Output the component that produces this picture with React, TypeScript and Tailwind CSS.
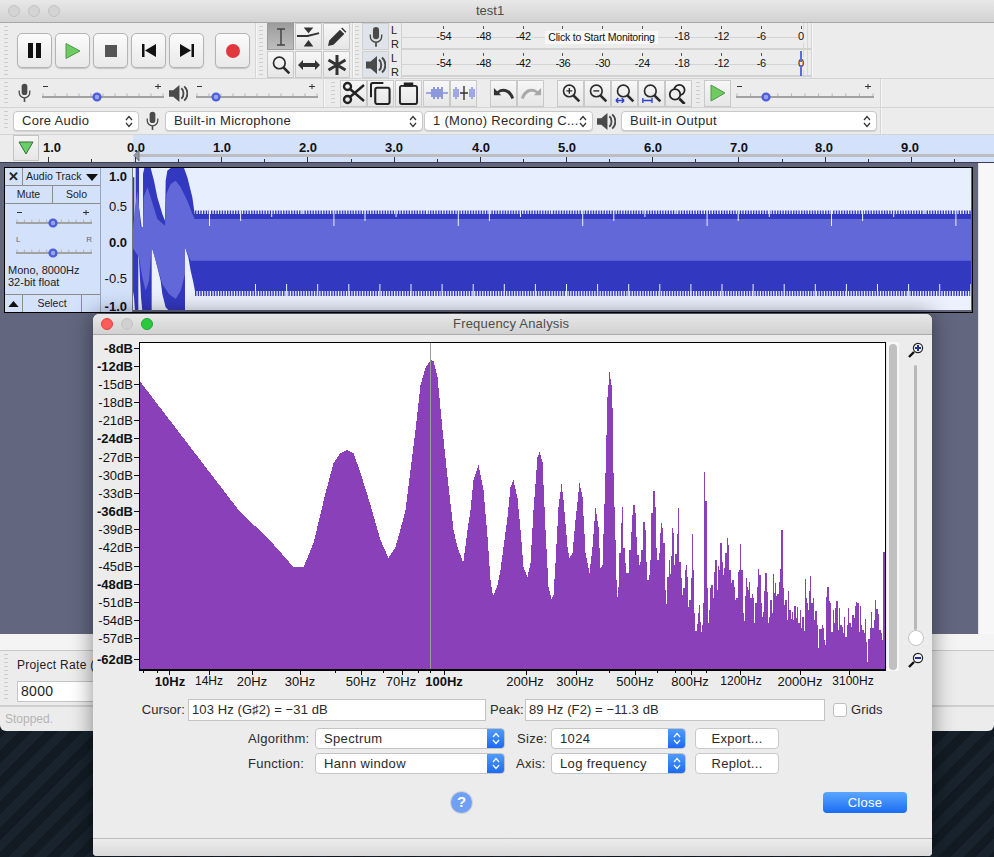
import React from "react";

const Grip = () => (
  <div className="h-full w-[4px] py-[3px]">
    <div className="h-full w-full bg-[repeating-linear-gradient(to_bottom,#cdcdcd_0px,#cdcdcd_1px,transparent_1px,transparent_4px)]" />
  </div>
);

const VDiv = () => <div className="h-full w-[2px] bg-[#d6d6d6] border-r border-[#f6f6f6]" />;

const Mic = ({ className = "" }: { className?: string }) => (
  <svg viewBox="0 0 16 24" className={className}>
    <rect x="4.5" y="0.5" width="7" height="14" rx="3.5" fill="#4a4a4a" />
    <path d="M1.5 9v2.5a6.5 6.5 0 0 0 13 0V9" fill="none" stroke="#4a4a4a" strokeWidth="1.6" />
    <path d="M8 18v5" stroke="#4a4a4a" strokeWidth="2" />
  </svg>
);

const Speaker = ({ className = "" }: { className?: string }) => (
  <svg viewBox="0 0 20 20" className={className}>
    <path d="M0 6.5h4.5L11 1v18l-6.5-5.5H0z" fill="#4a4a4a" />
    <path d="M13 4.5c3 2.5 3 8.5 0 11" fill="none" stroke="#4a4a4a" strokeWidth="2" />
    <path d="M16 2.5c4.5 4 4.5 11 0 15" fill="none" stroke="#4a4a4a" strokeWidth="2" />
  </svg>
);

const Slider = ({ w, x, labels = true }: { w: number; x: number; labels?: boolean }) => {
  const ticks: number[] = [];
  for (let i = 0; i <= 10; i++) ticks.push(1 + ((w - 2) * i) / 10);
  return (
    <svg width={w} height={22} viewBox={`0 0 ${w} 22`} className="shrink-0">
      {labels && <path d={`M1 3.5h5M${w - 9} 3.5h6M${w - 6} 1v5`} stroke="#333" strokeWidth="1" fill="none" />}
      {ticks.map((t) => (
        <path key={t} d={`M${t} 10.5v3`} stroke="#b5b5b5" strokeWidth="1" />
      ))}
      <rect x="0" y="13" width={w} height="2" fill="#a2a2a2" />
      <circle cx={x} cy="14" r="3.4" fill="#9aa6e0" stroke="#4a5ee0" strokeWidth="2.4" />
    </svg>
  );
};

const Transport = ({ children, className = "" }: { children: React.ReactNode; className?: string }) => (
  <div
    className={`flex h-[35px] w-[35px] items-center justify-center rounded-[5px] border border-[#b4b4b4] bg-gradient-to-b from-[#fbfbfb] to-[#e9e9e9] shadow-[0_1px_1px_#c4c4c4] ${className}`}
  >
    {children}
  </div>
);

const ToolBtn = ({
  children,
  selected = false,
  w = 27,
}: {
  children: React.ReactNode;
  selected?: boolean;
  w?: number;
}) => (
  <div
    style={{ width: w }}
    className={`flex h-[27px] items-center justify-center border ${
      selected
        ? "border-[#9a9a9a] bg-gradient-to-b from-[#9d9d9d] to-[#bdbdbd]"
        : "border-[#c9c9c9] bg-gradient-to-b from-[#f7f7f7] to-[#e6e6e6]"
    }`}
  >
    {children}
  </div>
);

const Lens = ({ children, size = 20, stroke = "#2b2b2b" }: { children?: React.ReactNode; size?: number; stroke?: string }) => (
  <svg viewBox="0 0 24 24" width={size} height={size}>
    <circle cx="10" cy="9.5" r="7" fill="none" stroke={stroke} strokeWidth="2" />
    <path d="M15 15l7 7" stroke={stroke} strokeWidth="3" />
    {children}
  </svg>
);

const Chev = ({ color }: { color: string }) => (
  <svg viewBox="0 0 8 13" width="8" height="13" className="shrink-0">
    <path d="M1 5l3-3.5L7 5M1 8l3 3.5L7 8" fill="none" stroke={color} strokeWidth="1.2" />
  </svg>
);

const SelectBox = ({ text, className = "" }: { text: string; className?: string }) => (
  <div
    className={`flex h-[20px] items-center justify-between rounded-[4px] border border-[#c9c9c9] bg-white pl-[8px] pr-[5px] text-[13px] tracking-[0.3px] text-[#2a2a2a] shadow-[0_1px_1px_#d0d0d0] ${className}`}
  >
    <span className="whitespace-nowrap">{text}</span>
    <Chev color="#333" />
  </div>
);

const DlgSelect = ({ text, className = "" }: { text: string; className?: string }) => (
  <div
    className={`flex h-[21px] items-stretch overflow-hidden rounded-[4px] border border-[#c4c4c4] bg-white text-[13px] tracking-[0.35px] text-[#2a2a2a] ${className}`}
  >
    <span className="flex-1 self-center whitespace-nowrap pl-[8px]">{text}</span>
    <span className="flex w-[17px] items-center justify-center bg-gradient-to-b from-[#4f9bff] to-[#1c6af0]">
      <Chev color="#ffffff" />
    </span>
  </div>
);

const DlgButton = ({ text }: { text: string }) => (
  <div className="flex h-[21px] w-[84px] items-center justify-center rounded-[4px] border border-[#c9c9c9] bg-white text-[13px] tracking-[0.3px] text-[#2a2a2a]">
    {text}
  </div>
);

const TrafficLight = ({ className }: { className: string }) => <div className={`h-[12px] w-[12px] rounded-full border ${className}`} />;

const meterLabels = ["-54", "-48", "-42", "-36", "-30", "-24", "-18", "-12", "-6", "0"];

const MeterRow = ({ peak = false, hideMiddle = false }: { peak?: boolean; hideMiddle?: boolean }) => (
  <div className="relative flex h-[27px] w-[409px] border-b-[2px] border-[#d2d2d2]">
    <div className="absolute left-0 right-[8px] top-[14px] h-[1px] bg-[#d4d4d4]" />
    <div className="absolute bottom-0 left-[401px] top-0 w-[5px] border-x border-[#d8d8d8]" />
    <div className="relative flex pl-[22px]">
      {meterLabels.map((l) => (
        <div key={l} className="flex w-[39.7px] flex-col items-center">
          <div className="mt-[3px] h-[3px] w-[1px] bg-[#555]" />
          <span className="mt-[1px] bg-[#ececec] text-[11px] leading-[13px] tracking-[-0.3px] text-[#111]">
            {hideMiddle && ["-36", "-30", "-24"].includes(l) ? "" : l}
          </span>
        </div>
      ))}
    </div>
    {peak && (
      <>
        <div className="absolute left-[398px] top-[1px] h-[11px] w-[2px] bg-[#5a6be0]" />
        <div className="absolute left-[398px] top-[15px] h-[11px] w-[2px] bg-[#5a6be0]" />
      </>
    )}
  </div>
);

const rulerLabels = [
  ["0.0", 136],
  ["1.0", 222],
  ["2.0", 308],
  ["3.0", 394],
  ["4.0", 481],
  ["5.0", 567],
  ["6.0", 653],
  ["7.0", 739],
  ["8.0", 824],
  ["9.0", 910],
] as const;

const Ruler = () => {
  const ticks: React.ReactNode[] = [];
  for (let i = 0; i < 20; i++) {
    const x = 135 + i * 43.1;
    ticks.push(<path key={i} d={`M${Math.round(x) + 0.5} ${i % 2 ? 159 : 157}V162`} stroke="#333" strokeWidth="1" />);
  }
  return (
    <div className="relative flex h-[27px] bg-[#ececec]">
      <div className="ml-[13px] flex h-[26px] w-[26px] items-center justify-center border border-[#c4c4c4] bg-gradient-to-b from-[#f6f6f6] to-[#e6e6e6]">
        <svg viewBox="0 0 16 14" width="16" height="14">
          <path d="M1 1h14L8 13z" fill="#66cf66" stroke="#3b6e3b" strokeWidth="1" />
        </svg>
      </div>
      <span className="ml-[4px] mt-[5px] text-[13px] font-bold leading-[15px] text-[#111]">1.0</span>
      <div className="absolute bottom-0 left-[133px] right-0 top-0 bg-[#d3e1fb]" />
      <svg className="absolute left-0 top-0" width="994" height="27" viewBox="0 135 994 27">
        <rect x="139" y="154" width="855" height="3" fill="#bdbdbd" />
        <path d="M139 150v11l-5-5.5z" fill="#999" stroke="#777" />
        <path d="M48.5 157V162M91.5 159V162" stroke="#333" />
        {ticks}
      </svg>
      {rulerLabels.map(([t, x]) => (
        <span
          key={t}
          style={{ left: x - 9 }}
          className="absolute top-[5px] text-[13px] font-bold leading-[15px] text-[#111]"
        >
          {t}
        </span>
      ))}
    </div>
  );
};

const P = (pts: number[][]) => pts.map(([x, y]) => `${130 + x / 3},${165 + y / 3}`).join(" ");

const Waveform = () => {
  const dark = [
    [10, 225], [10, 40], [16, 40], [16, 185], [20, 185], [20, 12], [30, 12], [30, 130], [38, 190], [42, 190], [42, 30], [46, 12], [65, 12], [75, 50], [85, 100], [100, 150], [108, 170], [110, 50], [115, 20], [125, 12], [165, 12], [175, 40], [190, 100], [197, 150], [2526, 150],
    [2526, 381], [198, 381], [192, 350], [185, 320], [178, 280], [168, 250], [168, 440], [120, 440], [110, 430], [100, 390], [95, 350], [85, 310], [75, 270], [68, 250], [68, 440], [40, 440], [36, 400], [30, 290], [28, 258], [28, 440], [18, 440], [15, 400], [10, 370],
  ];
  const light = [
    [10, 215], [18, 130], [26, 80], [30, 130], [35, 190], [42, 190], [44, 100], [55, 70], [65, 100], [85, 165], [108, 185], [112, 90], [125, 60], [140, 50], [155, 70], [175, 110], [190, 150], [197, 165], [2526, 165],
    [2526, 290], [185, 290], [168, 250], [168, 330], [155, 380], [140, 405], [120, 390], [100, 360], [80, 290], [68, 250], [60, 350], [50, 380], [40, 340], [30, 280], [10, 250],
  ];
  let comb = "";
  for (let x = 196; x < 972; x += 2.67) {
    comb += `M${x.toFixed(1)} 211.5h1.4v4h-1.4zM${x.toFixed(1)} 291h1.4v6h-1.4z`;
  }
  let teeth = "";
  for (let x = 200; x < 972; x += 13.4) {
    teeth += `M${x.toFixed(1)} 219h1.5v3h-1.5zM${x.toFixed(1)} 259.5h1.5v3h-1.5z`;
  }
  const gaps: React.ReactNode[] = [];
  const hs = [227, 222, 218, 215];
  for (let i = 0; i < 25; i++) {
    gaps.push(<rect key={`t${i}`} x={210 + i * 31.1} y={211} width={1} height={hs[i % 4] - 211} fill="#e9f0fe" />);
    gaps.push(<rect key={`b${i}`} x={256 + i * 31.1} y={285} width={1} height={12} fill="#e9f0fe" />);
  }
  return (
    <svg viewBox="134 169 838 142" width="838" height="142" preserveAspectRatio="none" className="block bg-gradient-to-b from-[#e6eefe] to-[#ecf1fc]">
      <polygon points={P(dark)} fill="#3338c0" />
      <path d={comb} fill="#3338c0" />
      <path d={teeth} fill="#3338c0" />
      <polygon points={P(light)} fill="#6368d8" />
      {gaps}
    </svg>
  );
};

const TrackPanel = () => (
  <div className="flex h-[144px] w-[95px] shrink-0 flex-col bg-[#d3e1fb] text-[#222]">
    <div className="flex h-[18px] border-b border-[#8d8d8d]">
      <div className="flex w-[18px] items-center justify-center border-r border-[#8d8d8d] text-[13px] font-bold leading-none">✕</div>
      <div className="flex flex-1 items-center justify-between pl-[3px] pr-[2px] pt-[1px] text-[10.5px]">
        <span>Audio Track</span>
        <svg viewBox="0 0 12 7" width="12" height="7">
          <path d="M0 0h12L6 7z" fill="#111" />
        </svg>
      </div>
    </div>
    <div className="flex h-[18px] border-b border-[#8d8d8d] text-[10.5px]">
      <div className="flex w-[48px] items-center justify-center border-r border-[#8d8d8d]">Mute</div>
      <div className="flex flex-1 items-center justify-center">Solo</div>
    </div>
    <div className="ml-[11px] mt-[5px]">
      <Slider w={76} x={37} />
    </div>
    <div className="ml-[11px] mt-[4px] flex w-[76px] justify-between text-[8px] leading-[9px] text-[#666]">
      <span>L</span>
      <span>R</span>
    </div>
    <div className="ml-[11px] mt-[-5px]">
      <Slider w={76} x={37} labels={false} />
    </div>
    <div className="ml-[3px] mt-[3px] text-[11px] leading-[12px]">
      <div>Mono, 8000Hz</div>
      <div>32-bit float</div>
    </div>
    <div className="mt-auto flex h-[18px] border-t border-[#8d8d8d]">
      <div className="flex w-[18px] items-center justify-center border-r border-[#8d8d8d]">
        <svg viewBox="0 0 12 7" width="11" height="6">
          <path d="M0 7h12L6 0z" fill="#111" />
        </svg>
      </div>
      <div className="flex w-[59px] items-center justify-center border-r border-[#8d8d8d] text-[10.5px]">Select</div>
    </div>
  </div>
);

const trackScale: [string, boolean, string][] = [
  ["1.0", true, "mt-[0px]"],
  ["0.5", false, "mt-[15px]"],
  ["0.0", true, "mt-[21px]"],
  ["-0.5", false, "mt-[21px]"],
  ["-1.0", true, "mt-[13px]"],
];

const TrackScale = () => (
  <div className="flex w-[32px] shrink-0 flex-col items-end border-l border-[#9aa4c0] bg-[#d3e1fb] pr-[5px] pt-[1px] text-[13px] leading-[15px] text-[#111]">
    {trackScale.map(([t, b, m]) => (
      <span key={t} className={`${m} ${b ? "font-bold" : ""}`}>
        {t}
      </span>
    ))}
  </div>
);

const smooth = [
  [140, 382], [238, 510], [270, 541], [285, 558], [293, 567], [303, 567], [306, 560], [313, 543], [325, 493], [333, 463], [340, 453], [347, 450], [353, 453], [360, 473], [370, 505], [380, 540], [388, 558], [395, 547], [403, 518], [405, 510], [415, 430], [420, 385], [425, 368], [430, 360], [433, 361], [437, 377], [442, 430], [447, 477], [453, 530], [457, 547], [462, 561], [463, 561], [467, 530], [470, 510], [473, 480], [478, 465], [483, 490], [487, 537], [490, 580], [492, 593], [493, 595], [497, 585], [500, 570], [503, 547], [507, 517], [510, 487], [513, 480], [517, 498], [520, 530], [523, 567], [527, 577], [530, 563], [533, 510], [537, 457], [539, 452], [542, 462], [545, 530], [548, 587], [551, 599], [553, 595], [555, 563], [558, 507], [561, 484], [563, 500], [567, 547], [569, 558], [572, 553], [575, 520], [579, 483], [582, 497], [585, 553], [589, 573], [592, 547], [595, 508], [598, 527], [600, 568], [602, 565], [605, 473], [607, 397], [609, 372], [611, 385], [612, 408], [613, 473], [615, 540], [616, 580], [617, 597],
];

const jag = [
  84, 470, 88, 370, 92, 280, 96, 232, 100, 355, 104, 400, 108, 430, 114, 430, 118, 360, 122, 305, 126, 255, 130, 225, 134, 250, 138, 320, 142, 375, 146, 405, 150, 395, 154, 360, 158, 305, 160, 277, 164, 300, 168, 395, 172, 450, 176, 435, 180, 390, 184, 250, 188, 195, 190, 183, 194, 232, 198, 355, 202, 390, 206, 370, 210, 310, 212, 280, 216, 295, 220, 340, 224, 480, 228, 522, 232, 440, 236, 390, 239, 432, 242, 378, 245, 295, 248, 308, 252, 405, 256, 372, 260, 312, 264, 235, 268, 395, 272, 445, 276, 495, 280, 475, 284, 420, 287, 405, 290, 440, 294, 530, 298, 510, 302, 445, 306, 312, 310, 420, 313, 548, 316, 602, 320, 582, 323, 550, 326, 525, 329, 575, 332, 605, 335, 585, 338, 520, 341, 270, 343, 126, 346, 212, 350, 475, 353, 580, 356, 540, 360, 475, 364, 465, 368, 505, 372, 425, 376, 390, 380, 480, 383, 408, 387, 420, 391, 340, 395, 395, 399, 435, 403, 415, 406, 370, 410, 375, 412, 325, 415, 345, 418, 420, 422, 460, 427, 450, 431, 470, 435, 510, 439, 505, 444, 425, 448, 420, 451, 342, 454, 420, 458, 550, 461, 572, 464, 498, 467, 445, 470, 470, 474, 480, 478, 455, 481, 505, 485, 492, 489, 505, 493, 580, 496, 520, 500, 470, 505, 418, 508, 435, 512, 520, 516, 560, 519, 545, 522, 482, 526, 430, 530, 485, 534, 580, 537, 560, 541, 510, 545, 550, 548, 432, 551, 488, 555, 460, 558, 498, 562, 492, 566, 455, 570, 418, 574, 300, 578, 475, 582, 525, 586, 510, 590, 570, 594, 482, 598, 540, 602, 568, 606, 545, 610, 570, 613, 528, 617, 565, 621, 530, 625, 580, 629, 540, 633, 595, 637, 562, 641, 602, 645, 446, 648, 505, 652, 520, 655, 540, 658, 482, 660, 438, 664, 518, 668, 505, 672, 570, 676, 542, 680, 585, 684, 655, 688, 597, 692, 598, 695, 585, 698, 595, 702, 630, 706, 645, 709, 500, 712, 470, 716, 512, 720, 520, 724, 605, 728, 540, 731, 578, 735, 535, 739, 512, 743, 600, 746, 535, 750, 585, 755, 590, 759, 610, 763, 560, 766, 620, 770, 585, 774, 535, 778, 580, 783, 592, 787, 555, 791, 565, 794, 528, 798, 515, 802, 520, 806, 605, 810, 528, 813, 585, 817, 600, 821, 610, 826, 568, 829, 637, 832, 695, 835, 628, 839, 595, 843, 545, 847, 595, 851, 570, 855, 510, 859, 538, 864, 552, 868, 600, 872, 608, 876, 630, 880, 366, 884, 366,
];

const spectrumPath = () => {
  let d = "M140 670";
  let s = 0;
  for (let x = 140; x <= 617; x++) {
    while (s < smooth.length - 2 && smooth[s + 1][0] <= x) s++;
    const [x0, y0] = smooth[s];
    const [x1, y1] = smooth[s + 1];
    const y = Math.round(y0 + ((y1 - y0) * (x - x0)) / (x1 - x0));
    d += `V${y}H${x + 1}`;
  }
  for (let i = 0; i < jag.length - 2; i += 2) {
    const nx = 590 + jag[i + 2] / 3;
    d += `V${(430 + jag[i + 1] / 3).toFixed(0)}H${Math.min(nx, 885).toFixed(1)}`;
  }
  return d + "V670Z";
};

const dbLabels: [string, boolean][] = [
  ["-8dB", true], ["-12dB", true], ["-15dB", false], ["-18dB", false], ["-21dB", false], ["-24dB", true], ["-27dB", false], ["-30dB", false], ["-33dB", false], ["-36dB", true], ["-39dB", false], ["-42dB", false], ["-45dB", false], ["-48dB", true], ["-51dB", false], ["-54dB", false], ["-57dB", false],
];

const YAxis = () => (
  <div className="mt-[-3px] flex w-[46px] shrink-0 flex-col text-[13px] leading-[15px] text-[#111]">
    {dbLabels.map(([t, b]) => (
      <div key={t} className="flex h-[18.2px] items-center justify-end">
        <span className={`mr-[1px] ${b ? "font-bold" : ""}`}>{t}</span>
        <span className="h-[1px] w-[5px] bg-[#111]" />
      </div>
    ))}
    <div className="flex h-[23px] items-center justify-end">
      <span className="mr-[1px] font-bold">-62dB</span>
      <span className="h-[1px] w-[5px] bg-[#111]" />
    </div>
  </div>
);

const xLabels: [string, number, boolean, boolean][] = [
  ["10Hz", 170, true, false], ["14Hz", 209, false, true], ["20Hz", 252, false, false], ["30Hz", 300, false, false], ["50Hz", 361, false, false], ["70Hz", 401, false, false], ["100Hz", 444, true, false], ["200Hz", 525, false, false], ["300Hz", 575, false, false], ["500Hz", 635, false, false], ["800Hz", 690, false, false], ["1200Hz", 741, false, true], ["2000Hz", 800, false, false], ["3100Hz", 853, false, true],
];
const xTicks = [143, 157, 169, 209, 252, 300, 335, 361, 383, 402, 418, 430, 444, 526, 576, 609, 635, 657, 675, 691, 706, 740, 800, 849];
const xMajor = [169, 209, 252, 300, 361, 402, 444, 526, 576, 635, 691, 740, 800, 849];

const XAxis = () => (
  <div className="relative h-[28px]">
    <svg className="absolute left-0 top-0" width="839" height="8" viewBox="93 671 839 8">
      {xTicks.map((x) => (
        <path key={x} d={`M${x + 0.5} 671V${xMajor.includes(x) ? 675 : 673}`} stroke="#111" />
      ))}
    </svg>
    {xLabels.map(([t, x, b, small]) => (
      <span
        key={t}
        style={{ left: x - 93 }}
        className={`absolute top-[3px] -translate-x-1/2 whitespace-nowrap leading-[15px] text-[#111] ${small ? "text-[12px]" : "text-[13px]"} ${b ? "font-bold" : ""}`}
      >
        {t}
      </span>
    ))}
  </div>
);

const ZoomGlyph = ({ minus = false }: { minus?: boolean }) => (
  <svg viewBox="0 0 16 16" width="16" height="16">
    <path d="M1 15l5-5" stroke="#111" strokeWidth="2.4" />
    <circle cx="10" cy="6" r="4.6" fill="#f4f4f4" stroke="#222" strokeWidth="1.2" />
    {minus ? (
      <path d="M7 6h6" stroke="#22309c" strokeWidth="2" />
    ) : (
      <path d="M7 6h6M10 3v6" stroke="#22309c" strokeWidth="2" />
    )}
  </svg>
);

const FrequencyDialog = () => (
  <div className="absolute left-[93px] top-[314px] flex h-[542px] w-[839px] flex-col rounded-t-[6px] rounded-b-[4px] bg-[#ececec] shadow-[0_0_22px_rgba(0,0,0,0.45)]">
    <div className="flex h-[21px] shrink-0 items-center rounded-t-[6px] border-b border-[#ababab] bg-gradient-to-b from-[#e8e8e8] to-[#d1d1d1] pl-[8px]">
      <div className="flex gap-[8px]">
        <TrafficLight className="border-[#e0443e] bg-[#fc5b57]" />
        <TrafficLight className="border-[#c4c4c4] bg-[#d0d0d0]" />
        <TrafficLight className="border-[#1aab29] bg-[#2ec840]" />
      </div>
      <span className="ml-[300px] text-[13px] tracking-[0.2px] text-[#4d4d4d]">Frequency Analysis</span>
    </div>
    <div className="mt-[7px] flex h-[329px] shrink-0">
      <YAxis />
      <div className="h-[329px] w-[747px] shrink-0 border-[1px] border-b-[2px] border-black bg-white">
        <svg viewBox="140 343 745 326" width="745" height="326" className="block" shapeRendering="crispEdges">
          <path d={spectrumPath()} fill="#8a40b8" />
          <rect x="430" y="343" width="1" height="327" fill="#9a9a9a" />
        </svg>
      </div>
      <div className="ml-[1px] flex h-[329px] w-[12px] justify-center bg-[#f7f7f7] pt-[2px]">
        <div className="h-[326px] w-[8px] rounded-full bg-[#c0c0c0]" />
      </div>
      <div className="flex w-[33px] flex-col items-center">
        <ZoomGlyph />
        <div className="mt-[7px] h-[265px] w-[3px] rounded-full bg-[#b8b8b8]" />
        <div className="h-[16px] w-[16px] rounded-full border border-[#c4c4c4] bg-white" />
        <div className="mt-[6px]">
          <ZoomGlyph minus />
        </div>
      </div>
    </div>
    <XAxis />
    <div className="flex h-[22px] shrink-0 items-center text-[13px] tracking-[0.1px] text-[#2a2a2a]">
      <span className="w-[92px] text-right">Cursor:</span>
      <div className="ml-[3px] flex h-[22px] w-[298px] items-center border border-[#c4c4c4] bg-white pl-[3px]">103 Hz (G♯2) = −31 dB</div>
      <span className="ml-[4px] w-[32px]">Peak:</span>
      <div className="ml-[3px] flex h-[22px] w-[300px] items-center border border-[#c4c4c4] bg-white pl-[3px]">89 Hz (F2) = −11.3 dB</div>
      <div className="ml-[8px] h-[14px] w-[14px] rounded-[3px] border border-[#c0c0c0] bg-white" />
      <span className="ml-[4px]">Grids</span>
    </div>
    <div className="mt-[7px] flex h-[21px] shrink-0 items-center text-[13px] tracking-[0.3px] text-[#2a2a2a]">
      <span className="ml-[155px] w-[62px]">Algorithm:</span>
      <DlgSelect text="Spectrum" className="ml-[5px] w-[190px]" />
      <span className="ml-[12px] w-[34px]">Size:</span>
      <DlgSelect text="1024" className="w-[135px]" />
      <div className="ml-[9px]">
        <DlgButton text="Export..." />
      </div>
    </div>
    <div className="mt-[4px] flex h-[21px] shrink-0 items-center text-[13px] tracking-[0.3px] text-[#2a2a2a]">
      <span className="ml-[155px] w-[62px]">Function:</span>
      <DlgSelect text="Hann window" className="ml-[5px] w-[190px]" />
      <span className="ml-[11px] w-[35px]">Axis:</span>
      <DlgSelect text="Log frequency" className="w-[135px]" />
      <div className="ml-[9px]">
        <DlgButton text="Replot..." />
      </div>
    </div>
    <div className="mt-[18px] flex h-[21px] shrink-0 items-center">
      <div className="ml-[358px] flex h-[21px] w-[21px] items-center justify-center rounded-full bg-[#6fa0f5] text-[15px] font-bold text-white shadow-[0_0_0_1px_#d4d4d4]">?</div>
      <div className="ml-[351px] flex h-[21px] w-[84px] items-center justify-center rounded-[4px] bg-gradient-to-b from-[#5aa6ff] to-[#1a6cf2] text-[13px] tracking-[0.3px] text-white">Close</div>
    </div>
    <div className="mt-auto h-[18px] rounded-b-[4px] border-t border-[#bcbcbc] bg-gradient-to-b from-[#ececec] to-[#d9d9d9]" />
  </div>
);

const MainWindow = () => (
  <div className="absolute left-0 top-0 flex h-[731px] w-[994px] flex-col overflow-hidden rounded-b-[6px] bg-[#ececec]">
    <div className="flex h-[23px] shrink-0 items-center border-b border-[#a8a8a8] bg-gradient-to-b from-[#e8e8e8] to-[#d2d2d2] pl-[8px]">
      <div className="flex gap-[8px]">
        <TrafficLight className="border-[#c2c2c2] bg-[#d4d4d4]" />
        <TrafficLight className="border-[#c2c2c2] bg-[#d4d4d4]" />
        <TrafficLight className="border-[#c2c2c2] bg-[#d4d4d4]" />
      </div>
      <span className="ml-[416px] text-[13px] text-[#4d4d4d]">test1</span>
    </div>

    <div className="flex h-[56px] shrink-0 items-center border-b border-[#d4d4d4]">
      <div className="ml-[4px] h-full"><Grip /></div>
      <div className="ml-[9px] flex gap-[3px]">
        <Transport>
          <svg viewBox="0 0 14 15" width="14" height="15"><path d="M0 0h5v15H0zM8 0h5v15H8z" fill="#111" /></svg>
        </Transport>
        <Transport>
          <svg viewBox="0 0 16 16" width="16" height="16"><path d="M1 0.5l14 7.5-14 7.5z" fill="#6dcb62" stroke="#4c9a48" /></svg>
        </Transport>
        <Transport>
          <svg viewBox="0 0 12 12" width="12" height="12"><rect width="12" height="12" fill="#555" /></svg>
        </Transport>
        <Transport>
          <svg viewBox="0 0 14 13" width="14" height="13"><path d="M0 0h2.5v13H0zM14 0v13L3 6.5z" fill="#111" /></svg>
        </Transport>
        <Transport>
          <svg viewBox="0 0 14 13" width="14" height="13"><path d="M11.5 0H14v13h-2.5zM0 0v13l11-6.5z" fill="#111" /></svg>
        </Transport>
      </div>
      <Transport className="ml-[11px]">
        <div className="h-[14px] w-[14px] rounded-full bg-[#e0383e]" />
      </Transport>
      <div className="ml-[5px] h-full"><VDiv /></div>
      <div className="ml-[2px] h-full"><Grip /></div>
      <div className="ml-[4px] grid grid-cols-3 gap-[1px]">
        <ToolBtn selected>
          <svg viewBox="0 0 14 18" width="14" height="18"><path d="M3 1h8M7 1v16M3 17h8" stroke="#444" strokeWidth="1.5" fill="none" /></svg>
        </ToolBtn>
        <ToolBtn>
          <svg viewBox="0 0 26 22" width="26" height="22"><path d="M1 10h11l12-3" stroke="#333" strokeWidth="2" fill="none" /><path d="M8 1h10l-5 6zM8 21h10l-5-7z" fill="#333" /></svg>
        </ToolBtn>
        <ToolBtn>
          <svg viewBox="0 0 20 20" width="20" height="20"><path d="M1 19l1.2-5.5L13 2.7l4.3 4.3L6.5 17.8zM14.2 1.6l1-1 4.2 4.2-1 1z" fill="#333" /></svg>
        </ToolBtn>
        <ToolBtn>
          <Lens size={20} />
        </ToolBtn>
        <ToolBtn>
          <svg viewBox="0 0 22 12" width="22" height="12"><path d="M0 6l5-5v3h12V1l5 5-5 5V8H5v3z" fill="#333" /></svg>
        </ToolBtn>
        <ToolBtn>
          <svg viewBox="0 0 20 20" width="20" height="20"><path d="M10 0v20M1.5 5l17 10M18.5 5l-17 10" stroke="#333" strokeWidth="3" /></svg>
        </ToolBtn>
      </div>
      <div className="ml-[2px] h-full"><VDiv /></div>
      <div className="ml-[1px] h-full"><Grip /></div>
      <div className="ml-[3px] flex flex-col gap-[1px]">
        <div className="flex h-[27px] w-[27px] items-center justify-center border border-[#d0d0d0] bg-[#dfe4ea]"><Mic className="h-[22px] w-[14px]" /></div>
        <div className="flex h-[27px] w-[27px] items-center justify-center border border-[#d0d0d0] bg-[#dfe4ea]"><Speaker className="h-[20px] w-[20px]" /></div>
      </div>
      <div className="ml-[2px] flex w-[9px] flex-col text-[11px] leading-[14px] text-[#222]">
        <span>L</span><span>R</span><span>L</span><span>R</span>
      </div>
      <div className="relative ml-[1px] flex h-full flex-col border-l border-[#d0d0d0]">
        <MeterRow hideMiddle />
        <MeterRow peak />
        <div className="absolute left-[143px] top-[8px] flex h-[13px] w-[113px] items-center justify-center bg-[#f8f8f8] text-[10.5px] tracking-[-0.2px] text-[#111]">Click to Start Monitoring</div>
      </div>
      <div className="h-full"><VDiv /></div>
    </div>

    <div className="flex h-[29px] shrink-0 items-center border-b border-[#d4d4d4]">
      <div className="ml-[4px] h-full"><Grip /></div>
      <Mic className="ml-[10px] h-[20px] w-[13px]" />
      <div className="ml-[11px] mt-[1px]"><Slider w={122} x={55} /></div>
      <Speaker className="ml-[5px] h-[19px] w-[19px]" />
      <div className="ml-[8px] mt-[1px]"><Slider w={122} x={20} /></div>
      <div className="ml-[5px] h-full"><VDiv /></div>
      <div className="ml-[6px] h-full"><Grip /></div>
      <div className="ml-[5px] flex">
        <ToolBtn>
          <svg viewBox="0 0 24 24" width="24" height="24" fill="none" stroke="#222" strokeWidth="2.4"><circle cx="5.5" cy="5.5" r="3.5" /><circle cx="5.5" cy="18.5" r="3.5" /><path d="M8 8l14 12M8 16L22 4" /></svg>
        </ToolBtn>
        <ToolBtn>
          <svg viewBox="0 0 22 24" width="21" height="23" fill="none" stroke="#222" strokeWidth="2.2"><path d="M14 1H3a2 2 0 0 0-2 2v13" /><rect x="5.5" y="6" width="15" height="17" rx="2" /></svg>
        </ToolBtn>
        <div className="w-[1px]" />
        <ToolBtn>
          <svg viewBox="0 0 20 24" width="19" height="23" fill="none" stroke="#222" strokeWidth="2"><rect x="1" y="4" width="18" height="19" rx="2" /><path d="M6 4h8V1.5H6z" fill="#222" /></svg>
        </ToolBtn>
        <div className="w-[1px]" />
        <ToolBtn>
          <svg viewBox="0 0 22 14" width="22" height="14" fill="none"><path d="M0 7h5M17 7h5" stroke="#4b5ed0" strokeWidth="1.2" /><path d="M6 3v8M8 1v12M10 3v8M12 1v12M14 3v8M16 1v12" stroke="#4b5ed0" strokeWidth="1.2" /></svg>
        </ToolBtn>
        <ToolBtn>
          <svg viewBox="0 0 22 16" width="22" height="16" fill="none"><path d="M1 4v8M3 2v12M5 4v8M17 4v8M19 2v12M21 4v8" stroke="#6a79dd" strokeWidth="1.2" /><path d="M7 8h8M11 1v14" stroke="#333" strokeWidth="1.4" /></svg>
        </ToolBtn>
      </div>
      <div className="ml-[13px] flex">
        <ToolBtn>
          <svg viewBox="0 0 24 14" width="22" height="13"><path d="M1 1v8h8L6.5 6.5C11 3.5 17 5 20 13l3-1C20 2 11-1 4.5 4.5z" fill="#333" /></svg>
        </ToolBtn>
        <ToolBtn>
          <svg viewBox="0 0 24 14" width="22" height="13"><path d="M23 1v8h-8l2.5-2.5C13 3.5 7 5 4 13l-3-1C4 2 13-1 19.5 4.5z" fill="#a9a9a9" /></svg>
        </ToolBtn>
      </div>
      <div className="ml-[13px] flex">
        <ToolBtn><Lens><path d="M6.5 9.5h7M10 6v7" stroke="#222" strokeWidth="1.6" /></Lens></ToolBtn>
        <ToolBtn><Lens><path d="M6.5 9.5h7" stroke="#222" strokeWidth="1.6" /></Lens></ToolBtn>
        <ToolBtn><Lens><path d="M1 21h10M1 21l3-3M1 21l3 3M11 21l-3-3M11 21l-3 3" stroke="#2d3fd0" strokeWidth="1.6" fill="none" /></Lens></ToolBtn>
        <ToolBtn><Lens><path d="M1 21h11M1 18v6M12 18v6" stroke="#2d3fd0" strokeWidth="1.6" fill="none" /></Lens></ToolBtn>
        <ToolBtn>
          <svg viewBox="0 0 24 24" width="21" height="21" fill="none" stroke="#222" strokeWidth="2"><circle cx="13" cy="8" r="6" /><circle cx="8" cy="13" r="6" fill="#f0f0f0" /><path d="M13 18l6 6" strokeWidth="3" /></svg>
        </ToolBtn>
      </div>
      <div className="ml-[4px] h-full"><Grip /></div>
      <div className="ml-[4px]">
        <ToolBtn>
          <svg viewBox="0 0 16 18" width="16" height="18"><path d="M1 1l14 8-14 8z" fill="#6dcb62" stroke="#4c9a48" /></svg>
        </ToolBtn>
      </div>
      <div className="ml-[5px] mt-[1px]"><Slider w={138} x={30} /></div>
      <div className="ml-[6px] h-full"><VDiv /></div>
    </div>

    <div className="flex h-[27px] shrink-0 items-center border-b border-[#d4d4d4]">
      <div className="ml-[4px] h-full"><Grip /></div>
      <SelectBox text="Core Audio" className="ml-[5px] w-[126px]" />
      <Mic className="ml-[7px] h-[20px] w-[13px]" />
      <SelectBox text="Built-in Microphone" className="ml-[6px] w-[258px]" />
      <SelectBox text="1 (Mono) Recording C..." className="ml-[1px] w-[169px]" />
      <Speaker className="ml-[4px] h-[19px] w-[19px]" />
      <SelectBox text="Built-in Output" className="ml-[5px] w-[256px]" />
      <div className="ml-[3px] h-full"><VDiv /></div>
    </div>

    <Ruler />

    <div className="relative flex min-h-0 flex-1 border-t border-[#3a3d50] bg-[#62677f]">
      <div className="ml-[4px] mt-[4px] flex h-[146px] w-[969px] border border-y-[1.5px] border-black">
        <TrackPanel />
        <TrackScale />
        <div className="border-l border-[#777]">
          <Waveform />
        </div>
      </div>
      <div className="absolute bottom-0 right-0 top-0 w-[16px] border-l border-[#e2e2e2] bg-[#f7f7f7]" />
    </div>

    <div className="h-[17px] shrink-0 border-b border-[#c8c8c8] bg-[#f4f4f4]" />
    <div className="flex h-[56px] shrink-0 border-b-[2px] border-[#cfcfcf] bg-[#ececec]">
      <div className="ml-[4px] h-full"><Grip /></div>
      <div className="ml-[9px] flex flex-col">
        <span className="mt-[7px] whitespace-nowrap text-[12px] leading-[14px] tracking-[0.3px] text-[#222]">Project Rate (Hz)</span>
        <div className="mt-[9px] flex h-[21px] w-[100px] items-center border border-[#c4c4c4] bg-white pl-[3px] text-[14px] tracking-[0.3px] text-[#222]">8000</div>
      </div>
    </div>
    <div className="flex h-[24px] shrink-0 items-center pl-[5px] text-[12px] text-[#b4b4b4]">Stopped.</div>
  </div>
);

export default function App() {
  return (
    <div className="relative h-[857px] w-[994px] overflow-hidden bg-[#16202a] bg-[repeating-linear-gradient(135deg,#18232d_0px,#18232d_9px,#121b24_9px,#121b24_18px)] font-['Liberation_Sans',Arial,sans-serif]">
      <MainWindow />
      <FrequencyDialog />
    </div>
  );
}
